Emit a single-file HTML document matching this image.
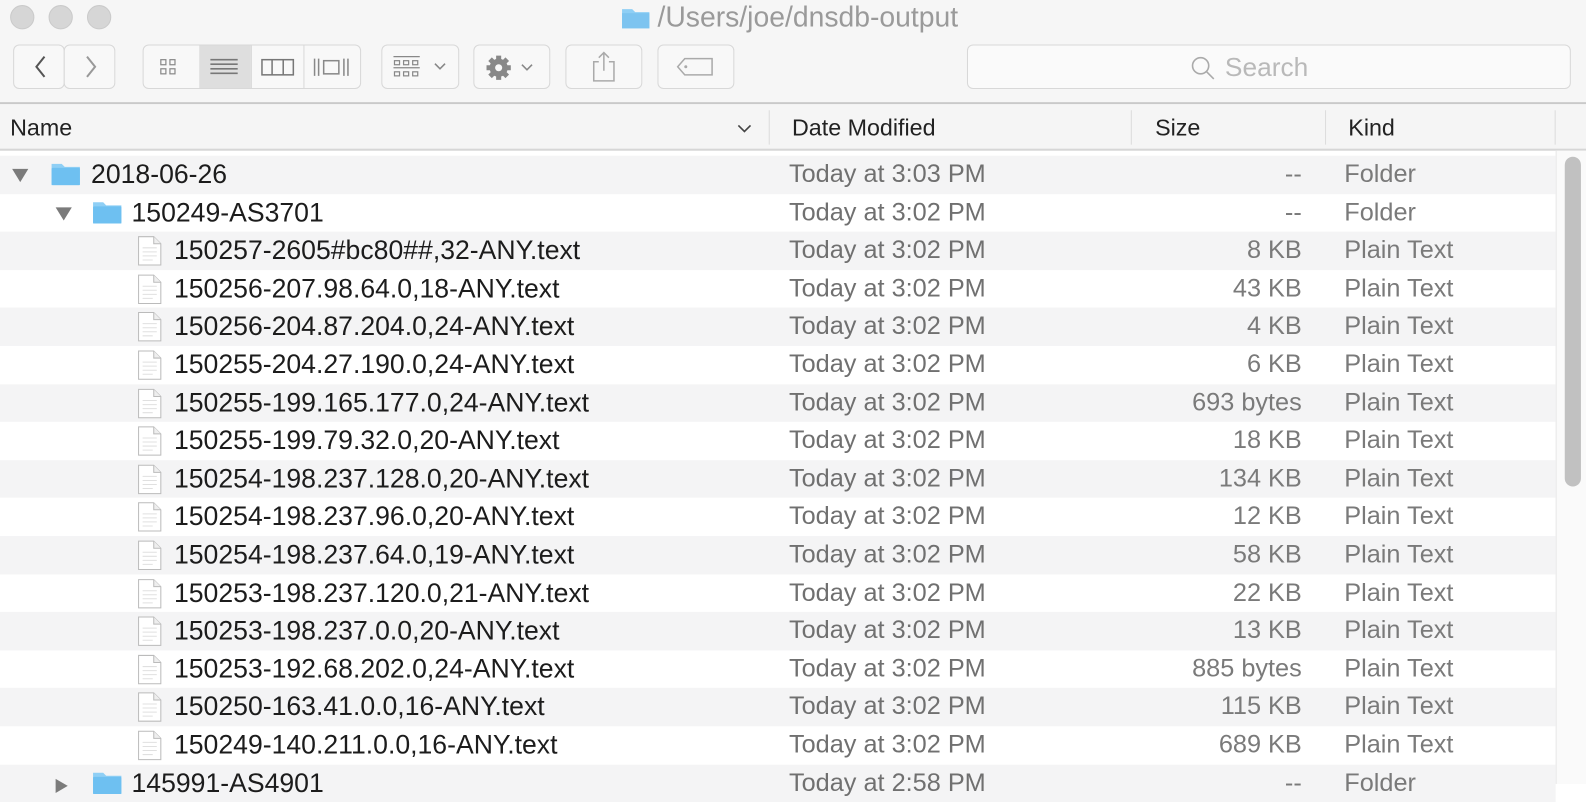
<!DOCTYPE html>
<html><head><meta charset="utf-8"><style>
*{margin:0;padding:0;box-sizing:border-box}
body{width:1586px;height:775px;overflow:hidden;background:#fff;font-family:"Liberation Sans",Helvetica,Arial,sans-serif;position:relative}
#w{position:absolute;left:0;top:0;width:1568px;height:767px;transform:scale(1.01148);transform-origin:0 0}
.top{position:absolute;left:0;top:0;width:1568px;height:103px;background:#f6f6f6;border-bottom:2px solid #c9c9c9}
.tl{position:absolute;top:5px;width:24px;height:24px;border-radius:50%;background:#d6d6d6;border:1px solid #cacaca}
.title{position:absolute;left:650px;top:1px;font-size:28px;color:#9a9a9a}
.btn{position:absolute;top:44px;height:44px;border:1px solid #d8d8d8;border-radius:6px;background:#f8f8f8}
.hdr{position:absolute;left:0;top:103px;width:1568px;height:46px;background:#f5f5f5;border-bottom:2px solid #d6d6d6}
.hdr span{position:absolute;top:10px;font-size:23px;color:#222}
.sep{position:absolute;top:6px;width:1px;height:34px;background:#dcdcdc}
.row{position:absolute;left:0;width:1538px;height:37.6px;font-size:25px}
.row.g{background:#f4f4f5}
.row span{position:absolute;top:4px;white-space:nowrap}
.n{color:#1c1c1c;font-size:26.3px;top:3px!important}
.d{left:780px;color:#707070}
.s{right:251px;color:#7a7a7a;text-align:right}
.k{left:1329px;color:#7a7a7a}
.tri{position:absolute;top:13px;width:0;height:0;border-left:8px solid transparent;border-right:8px solid transparent;border-top:13px solid #7b7b7b}
.fold{position:absolute;top:6px;width:30px;height:24px}
.doc{position:absolute;left:136px;top:4px;width:24px;height:30px}
.sb{position:absolute;left:1538px;top:149px;width:30px;height:626px;background:#fafafa;border-left:1px solid #e8e8e8}
.thumb{position:absolute;left:8px;top:6px;width:16px;height:326px;border-radius:8px;background:#c1c1c1}
</style></head><body><div id="w">
<div class="top">
<div class="tl" style="left:10px"></div><div class="tl" style="left:48px"></div><div class="tl" style="left:86px"></div>
<svg style="position:absolute;left:614px;top:6px" width="29" height="23"><path d="M1 3h10l3 3h14v16H1z" fill="#8fcff5"/><rect x="1" y="7" width="27" height="15" fill="#7dc4f0"/></svg>
<div class="title">/Users/joe/dnsdb-output</div>
<div class="btn" style="left:13px;width:51px"></div><div class="btn" style="left:63px;width:51px"></div>
<svg style="position:absolute;left:28px;top:54px" width="80" height="24"><path d="M16 2L8 12l8 10" stroke="#555" stroke-width="2" fill="none"/><path d="M58 2l8 10-8 10" stroke="#999" stroke-width="2" fill="none"/></svg>
<div class="btn" style="left:141px;width:216px"></div>
<div style="position:absolute;left:197px;top:45px;width:51px;height:42px;background:#dedede"></div>
<div style="position:absolute;left:248px;top:45px;width:1px;height:42px;background:#d8d8d8"></div>
<div style="position:absolute;left:300px;top:45px;width:1px;height:42px;background:#d8d8d8"></div>
<svg style="position:absolute;left:141px;top:44px" width="216" height="44">
<g fill="none" stroke="#888" stroke-width="1.2"><rect x="18" y="15" width="5" height="5"/><rect x="27" y="15" width="5" height="5"/><rect x="18" y="24" width="5" height="5"/><rect x="27" y="24" width="5" height="5"/></g>
<g stroke="#777" stroke-width="1.6"><path d="M67 15h27M67 19.5h27M67 24h27M67 28.5h27"/></g>
<g fill="none" stroke="#777" stroke-width="1.5"><rect x="118" y="15" width="31" height="15"/><path d="M128 15v15M139 15v15"/></g>
<g fill="none" stroke="#888" stroke-width="1.5"><path d="M170 14v17M174 14v17M199 14v17M203 14v17"/><rect x="179" y="16" width="15" height="13"/></g>
</svg>
<div class="btn" style="left:377px;width:77px"></div>
<svg style="position:absolute;left:388px;top:54px" width="60" height="26"><g fill="none" stroke="#888" stroke-width="1.2"><path d="M1 2h26"/><rect x="2" y="6" width="5" height="4"/><rect x="11" y="6" width="5" height="4"/><rect x="20" y="6" width="5" height="4"/><path d="M1 13h26"/><rect x="2" y="17" width="5" height="4"/><rect x="11" y="17" width="5" height="4"/><rect x="20" y="17" width="5" height="4"/><path d="M42 9l5 5 5-5" stroke-width="1.6"/></g></svg>
<div class="btn" style="left:468px;width:76px"></div>
<svg style="position:absolute;left:478px;top:52px" width="60" height="30"><g fill="#888"><circle cx="15" cy="15" r="9"/><g stroke="#888" stroke-width="5"><path d="M15 3v24M3 15h24M6.5 6.5l17 17M23.5 6.5l-17 17"/></g></g><circle cx="15" cy="15" r="3.5" fill="#f8f8f8"/><path d="M38 12l5 5 5-5" stroke="#888" stroke-width="1.6" fill="none"/></svg>
<div class="btn" style="left:559px;width:76px"></div>
<svg style="position:absolute;left:583px;top:50px" width="28" height="32"><g fill="none" stroke="#aaa" stroke-width="1.5"><path d="M9 11H4v19h20V11h-5"/><path d="M14 2v18M9 7l5-5 5 5"/></g></svg>
<div class="btn" style="left:650px;width:76px"></div>
<svg style="position:absolute;left:668px;top:56px" width="40" height="20"><path d="M9 2h27v16H9L2 10z" fill="none" stroke="#aaa" stroke-width="1.5"/><circle cx="10" cy="10" r="1.5" fill="#aaa"/></svg>
<div class="btn" style="left:956px;width:597px;background:#fafafa"></div>
<svg style="position:absolute;left:1176px;top:54px" width="26" height="26"><circle cx="11" cy="11" r="8" fill="none" stroke="#aaa" stroke-width="1.6"/><path d="M17 17l7 7" stroke="#aaa" stroke-width="1.6"/></svg>
<div style="position:absolute;left:1211px;top:51px;font-size:26px;color:#b9b9b9">Search</div>
</div>
<div class="hdr">
<span style="left:10px">Name</span>
<svg style="position:absolute;left:728px;top:19px" width="16" height="10"><path d="M2 2l6 6 6-6" stroke="#444" stroke-width="1.6" fill="none"/></svg>
<div class="sep" style="left:760px"></div><span style="left:783px">Date Modified</span>
<div class="sep" style="left:1118px"></div><span style="left:1142px">Size</span>
<div class="sep" style="left:1310px"></div><span style="left:1333px">Kind</span>
<div class="sep" style="left:1537px"></div>
</div>
<div class="row g" style="top:154px"><div class="tri" style="left:12px"></div><svg class="fold" style="left:50px" viewBox="0 0 30 24"><path d="M1 2h10l3 3h15v18H1z" fill="#8fcff5"/><rect x="1" y="6" width="28" height="17" rx="1" fill="#6ec0f1"/></svg><span class="n" style="left:90px">2018-06-26</span><span class="d">Today at 3:03 PM</span><span class="s">--</span><span class="k">Folder</span></div>
<div class="row" style="top:191.6px"><div class="tri" style="left:55px"></div><svg class="fold" style="left:91px" viewBox="0 0 30 24"><path d="M1 2h10l3 3h15v18H1z" fill="#8fcff5"/><rect x="1" y="6" width="28" height="17" rx="1" fill="#6ec0f1"/></svg><span class="n" style="left:130px">150249-AS3701</span><span class="d">Today at 3:02 PM</span><span class="s">--</span><span class="k">Folder</span></div>
<div class="row g" style="top:229.2px"><svg class="doc" viewBox="0 0 24 30"><path d="M1 1h15l7 7v21H1z" fill="#fff" stroke="#bbb"/><path d="M16 1v7h7" fill="#eee" stroke="#bbb"/><path d="M5 12h14M5 16h14M5 20h14M5 24h10" stroke="#e0e0e0"/></svg><span class="n" style="left:172px">150257-2605#bc80##,32-ANY.text</span><span class="d">Today at 3:02 PM</span><span class="s">8 KB</span><span class="k">Plain Text</span></div>
<div class="row" style="top:266.8px"><svg class="doc" viewBox="0 0 24 30"><path d="M1 1h15l7 7v21H1z" fill="#fff" stroke="#bbb"/><path d="M16 1v7h7" fill="#eee" stroke="#bbb"/><path d="M5 12h14M5 16h14M5 20h14M5 24h10" stroke="#e0e0e0"/></svg><span class="n" style="left:172px">150256-207.98.64.0,18-ANY.text</span><span class="d">Today at 3:02 PM</span><span class="s">43 KB</span><span class="k">Plain Text</span></div>
<div class="row g" style="top:304.4px"><svg class="doc" viewBox="0 0 24 30"><path d="M1 1h15l7 7v21H1z" fill="#fff" stroke="#bbb"/><path d="M16 1v7h7" fill="#eee" stroke="#bbb"/><path d="M5 12h14M5 16h14M5 20h14M5 24h10" stroke="#e0e0e0"/></svg><span class="n" style="left:172px">150256-204.87.204.0,24-ANY.text</span><span class="d">Today at 3:02 PM</span><span class="s">4 KB</span><span class="k">Plain Text</span></div>
<div class="row" style="top:342px"><svg class="doc" viewBox="0 0 24 30"><path d="M1 1h15l7 7v21H1z" fill="#fff" stroke="#bbb"/><path d="M16 1v7h7" fill="#eee" stroke="#bbb"/><path d="M5 12h14M5 16h14M5 20h14M5 24h10" stroke="#e0e0e0"/></svg><span class="n" style="left:172px">150255-204.27.190.0,24-ANY.text</span><span class="d">Today at 3:02 PM</span><span class="s">6 KB</span><span class="k">Plain Text</span></div>
<div class="row g" style="top:379.6px"><svg class="doc" viewBox="0 0 24 30"><path d="M1 1h15l7 7v21H1z" fill="#fff" stroke="#bbb"/><path d="M16 1v7h7" fill="#eee" stroke="#bbb"/><path d="M5 12h14M5 16h14M5 20h14M5 24h10" stroke="#e0e0e0"/></svg><span class="n" style="left:172px">150255-199.165.177.0,24-ANY.text</span><span class="d">Today at 3:02 PM</span><span class="s">693 bytes</span><span class="k">Plain Text</span></div>
<div class="row" style="top:417.2px"><svg class="doc" viewBox="0 0 24 30"><path d="M1 1h15l7 7v21H1z" fill="#fff" stroke="#bbb"/><path d="M16 1v7h7" fill="#eee" stroke="#bbb"/><path d="M5 12h14M5 16h14M5 20h14M5 24h10" stroke="#e0e0e0"/></svg><span class="n" style="left:172px">150255-199.79.32.0,20-ANY.text</span><span class="d">Today at 3:02 PM</span><span class="s">18 KB</span><span class="k">Plain Text</span></div>
<div class="row g" style="top:454.8px"><svg class="doc" viewBox="0 0 24 30"><path d="M1 1h15l7 7v21H1z" fill="#fff" stroke="#bbb"/><path d="M16 1v7h7" fill="#eee" stroke="#bbb"/><path d="M5 12h14M5 16h14M5 20h14M5 24h10" stroke="#e0e0e0"/></svg><span class="n" style="left:172px">150254-198.237.128.0,20-ANY.text</span><span class="d">Today at 3:02 PM</span><span class="s">134 KB</span><span class="k">Plain Text</span></div>
<div class="row" style="top:492.4px"><svg class="doc" viewBox="0 0 24 30"><path d="M1 1h15l7 7v21H1z" fill="#fff" stroke="#bbb"/><path d="M16 1v7h7" fill="#eee" stroke="#bbb"/><path d="M5 12h14M5 16h14M5 20h14M5 24h10" stroke="#e0e0e0"/></svg><span class="n" style="left:172px">150254-198.237.96.0,20-ANY.text</span><span class="d">Today at 3:02 PM</span><span class="s">12 KB</span><span class="k">Plain Text</span></div>
<div class="row g" style="top:530px"><svg class="doc" viewBox="0 0 24 30"><path d="M1 1h15l7 7v21H1z" fill="#fff" stroke="#bbb"/><path d="M16 1v7h7" fill="#eee" stroke="#bbb"/><path d="M5 12h14M5 16h14M5 20h14M5 24h10" stroke="#e0e0e0"/></svg><span class="n" style="left:172px">150254-198.237.64.0,19-ANY.text</span><span class="d">Today at 3:02 PM</span><span class="s">58 KB</span><span class="k">Plain Text</span></div>
<div class="row" style="top:567.6px"><svg class="doc" viewBox="0 0 24 30"><path d="M1 1h15l7 7v21H1z" fill="#fff" stroke="#bbb"/><path d="M16 1v7h7" fill="#eee" stroke="#bbb"/><path d="M5 12h14M5 16h14M5 20h14M5 24h10" stroke="#e0e0e0"/></svg><span class="n" style="left:172px">150253-198.237.120.0,21-ANY.text</span><span class="d">Today at 3:02 PM</span><span class="s">22 KB</span><span class="k">Plain Text</span></div>
<div class="row g" style="top:605.2px"><svg class="doc" viewBox="0 0 24 30"><path d="M1 1h15l7 7v21H1z" fill="#fff" stroke="#bbb"/><path d="M16 1v7h7" fill="#eee" stroke="#bbb"/><path d="M5 12h14M5 16h14M5 20h14M5 24h10" stroke="#e0e0e0"/></svg><span class="n" style="left:172px">150253-198.237.0.0,20-ANY.text</span><span class="d">Today at 3:02 PM</span><span class="s">13 KB</span><span class="k">Plain Text</span></div>
<div class="row" style="top:642.8px"><svg class="doc" viewBox="0 0 24 30"><path d="M1 1h15l7 7v21H1z" fill="#fff" stroke="#bbb"/><path d="M16 1v7h7" fill="#eee" stroke="#bbb"/><path d="M5 12h14M5 16h14M5 20h14M5 24h10" stroke="#e0e0e0"/></svg><span class="n" style="left:172px">150253-192.68.202.0,24-ANY.text</span><span class="d">Today at 3:02 PM</span><span class="s">885 bytes</span><span class="k">Plain Text</span></div>
<div class="row g" style="top:680.4px"><svg class="doc" viewBox="0 0 24 30"><path d="M1 1h15l7 7v21H1z" fill="#fff" stroke="#bbb"/><path d="M16 1v7h7" fill="#eee" stroke="#bbb"/><path d="M5 12h14M5 16h14M5 20h14M5 24h10" stroke="#e0e0e0"/></svg><span class="n" style="left:172px">150250-163.41.0.0,16-ANY.text</span><span class="d">Today at 3:02 PM</span><span class="s">115 KB</span><span class="k">Plain Text</span></div>
<div class="row" style="top:718px"><svg class="doc" viewBox="0 0 24 30"><path d="M1 1h15l7 7v21H1z" fill="#fff" stroke="#bbb"/><path d="M16 1v7h7" fill="#eee" stroke="#bbb"/><path d="M5 12h14M5 16h14M5 20h14M5 24h10" stroke="#e0e0e0"/></svg><span class="n" style="left:172px">150249-140.211.0.0,16-ANY.text</span><span class="d">Today at 3:02 PM</span><span class="s">689 KB</span><span class="k">Plain Text</span></div>
<div class="row g" style="top:755.6px"><div style="position:absolute;left:55px;top:14px;width:0;height:0;border-top:7px solid transparent;border-bottom:7px solid transparent;border-left:12px solid #7b7b7b"></div><svg class="fold" style="left:91px" viewBox="0 0 30 24"><path d="M1 2h10l3 3h15v18H1z" fill="#8fcff5"/><rect x="1" y="6" width="28" height="17" rx="1" fill="#6ec0f1"/></svg><span class="n" style="left:130px">145991-AS4901</span><span class="d">Today at 2:58 PM</span><span class="s">--</span><span class="k">Folder</span></div>
<div class="sb"><div class="thumb"></div></div>
</div></body></html>
